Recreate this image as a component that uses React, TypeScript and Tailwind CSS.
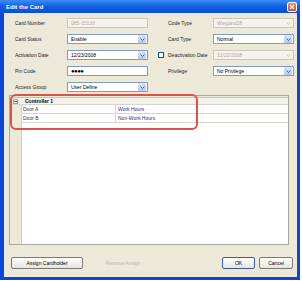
import { ReactNode } from "react";

const FONT = "font-['Tahoma','Liberation_Sans',sans-serif]";

function Arrow({ disabled }: { disabled?: boolean }) {
  return (
    <div
      className={`ml-auto mr-[1px] flex h-[8px] w-[8px] items-center justify-center rounded-[1px] ${
        disabled ? "bg-[#f4f3ee]" : "bg-gradient-to-b from-[#dce6fd] to-[#b3c7f6]"
      }`}
    >
      <svg width="5" height="3" viewBox="0 0 5 3">
        <path
          d="M0.5 0.5L2.5 2.5L4.5 0.5"
          fill="none"
          stroke={disabled ? "#c9c7ba" : "#4d6185"}
          strokeWidth="1"
        />
      </svg>
    </div>
  );
}

function Field({
  value,
  select,
  disabled,
  children,
}: {
  value?: string;
  select?: boolean;
  disabled?: boolean;
  children?: ReactNode;
}) {
  return (
    <div
      className={`flex h-[10px] w-[81px] items-center border pl-[3px] ${
        disabled ? "border-[#c9c7ba] bg-[#f5f4ea] text-[#aca899]" : "border-[#7f9db9] bg-white text-black"
      }`}
    >
      <span className="leading-none">{children ?? value}</span>
      {select && <Arrow disabled={disabled} />}
    </div>
  );
}

function Row({ left, right }: { left: ReactNode; right: ReactNode }) {
  return (
    <div className="flex h-[16px] items-center">
      {left}
      <div className="w-[10px]" />
      {right}
    </div>
  );
}

function Label({ text, w }: { text: string; w: string }) {
  return <div className={`${w} leading-none text-[#222]`}>{text}</div>;
}

export default function App() {
  return (
    <div className={`relative h-[281px] w-[302px] bg-white text-[5px] ${FONT}`}>
      <div className="flex h-[280px] w-[300px] flex-col bg-[#0b47d2]">
        {/* Title bar */}
        <div className="flex h-[13px] shrink-0 items-center bg-gradient-to-b from-[#3d8cf5] via-[#0e5fe2] to-[#0a50d3] pl-[6px] pr-[3px]">
          <span className="text-[6px] font-bold leading-none text-white">Edit the Card</span>
          <div className="ml-auto flex h-[10px] w-[10px] items-center justify-center rounded-[2px] border border-white bg-gradient-to-b from-[#f08d6d] to-[#d6431f]">
            <svg width="6" height="6" viewBox="0 0 6 6">
              <path d="M1 1L5 5M5 1L1 5" stroke="white" strokeWidth="1.3" />
            </svg>
          </div>
        </div>

        {/* Body */}
        <div className="flex flex-1 pb-[3px] pl-[4px] pr-[3px]">
          <div className="flex flex-1 flex-col bg-[#ece9d8]">
            <div className="flex flex-col pl-[11px] pt-[2px]">
              <Row
                left={
                  <>
                    <Label text="Card Number" w="w-[52px]" />
                    <Field value="085-33130" disabled />
                  </>
                }
                right={
                  <>
                    <div className="w-[10px]" />
                    <Label text="Code Type" w="w-[45px]" />
                    <Field value="Wiegand26" select disabled />
                  </>
                }
              />
              <Row
                left={
                  <>
                    <Label text="Card Status" w="w-[52px]" />
                    <Field value="Enable" select />
                  </>
                }
                right={
                  <>
                    <div className="w-[10px]" />
                    <Label text="Card Type" w="w-[45px]" />
                    <Field value="Normal" select />
                  </>
                }
              />
              <Row
                left={
                  <>
                    <Label text="Activation Date" w="w-[52px]" />
                    <Field value="12/23/2008" select />
                  </>
                }
                right={
                  <>
                    <div className="mr-[1px] h-[6px] w-[6px] border border-[#1c5180] bg-white" />
                    <div className="w-[3px]" />
                    <Label text="Deactivation Date" w="w-[45px]" />
                    <Field value="12/22/2008" select disabled />
                  </>
                }
              />
              <Row
                left={
                  <>
                    <Label text="Pin Code" w="w-[52px]" />
                    <Field>
                      <span className="text-[6px] font-bold tracking-[-0.5px]">●●●●</span>
                    </Field>
                  </>
                }
                right={
                  <>
                    <div className="w-[10px]" />
                    <Label text="Privilege" w="w-[45px]" />
                    <Field value="No Privilege" select />
                  </>
                }
              />
              <Row
                left={
                  <>
                    <Label text="Access Group" w="w-[52px]" />
                    <Field value="User Define" select />
                  </>
                }
                right={<div />}
              />
            </div>

            {/* Grid */}
            <div className="ml-[5px] flex h-[150px] w-[280px] flex-col border border-[#aca899] bg-white">
              <div className="h-[2px] border-b border-[#c7c4b6] bg-[#ece9d8]" />
              <div className="flex h-[7px] items-center border-b border-[#d8d5ca] bg-[#f3f2ea]">
                <div className="flex w-[11px] justify-center">
                  <div className="flex h-[5px] w-[5px] items-center justify-center border border-[#a9a69a] bg-white">
                    <div className="h-[1px] w-[3px] bg-[#555]" />
                  </div>
                </div>
                <span className="ml-[4px] font-bold leading-none text-black">Controller 1</span>
              </div>
              <div className="flex flex-1">
                <div className="w-[12px] border-r border-[#d2cfc2] bg-[#ece9d8]" />
                <div className="flex flex-1 flex-col">
                  {[
                    ["Door A", "Work Hours"],
                    ["Door B", "Non-Work Hours"],
                  ].map(([door, hours]) => (
                    <div key={door} className="flex h-[9px] items-center border-b border-[#d8d5ca]">
                      <div className="flex h-full w-[94px] items-center border-r border-[#d8d5ca] pl-[1px] leading-none text-[#333]">
                        {door}
                      </div>
                      <div className="pl-[2px] leading-none text-[#2a2a9c]">{hours}</div>
                    </div>
                  ))}
                </div>
              </div>
            </div>

            {/* Buttons */}
            <div className="mt-[12px] flex h-[12px] items-center pl-[7px] pr-[4px]">
              <div className="flex h-[12px] w-[72px] items-center justify-center rounded-[2px] border border-[#7a7a7a] bg-gradient-to-b from-white to-[#e6e4dc] leading-none text-black">
                Assign Cardholder
              </div>
              <div className="ml-[4px] flex h-[12px] w-[72px] items-center justify-center leading-none text-[#b8b5a6]">
                Remove Assign
              </div>
              <div className="ml-auto flex h-[12px] w-[33px] items-center justify-center rounded-[2px] border border-[#3c5a9c] bg-gradient-to-b from-white to-[#e6e4dc] leading-none text-black">
                OK
              </div>
              <div className="ml-[4px] flex h-[12px] w-[34px] items-center justify-center rounded-[2px] border border-[#7a7a7a] bg-gradient-to-b from-white to-[#e6e4dc] leading-none text-black">
                Cancel
              </div>
            </div>
          </div>
        </div>
      </div>

      {/* Red highlight annotation */}
      <div className="pointer-events-none absolute left-[10px] top-[94px] h-[36px] w-[188px] rounded-[6px] border-2 border-[#d9534a]" />
    </div>
  );
}
